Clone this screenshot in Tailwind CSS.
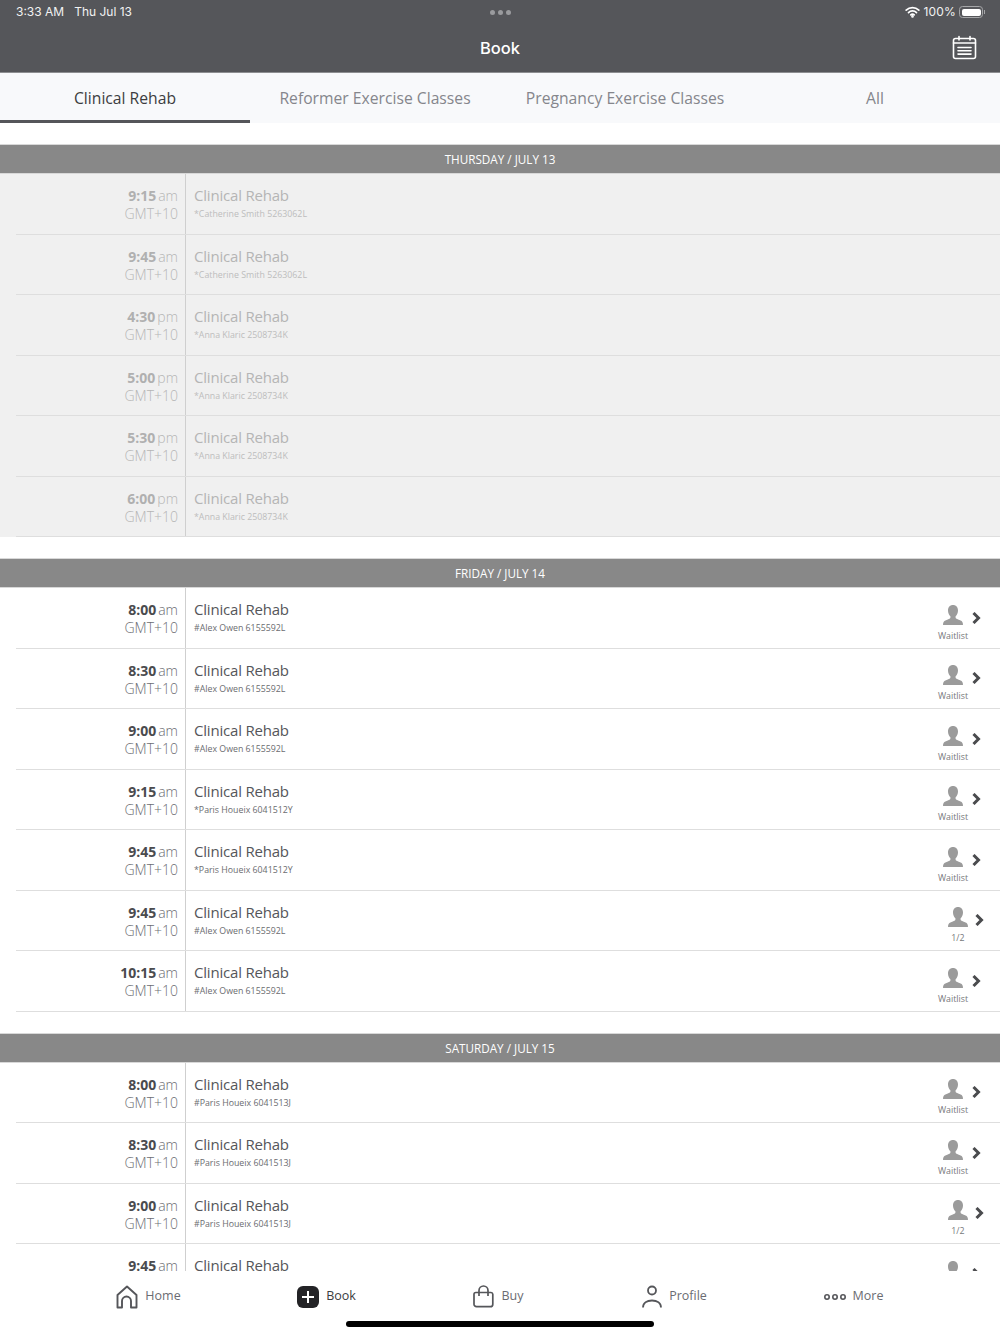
<!DOCTYPE html>
<html lang="en">
<head>
  <meta charset="UTF-8">
  <meta name="viewport" content="width=device-width, initial-scale=1.0">
  <title>Book</title>
  <script src="https://cdn.jsdelivr.net/npm/@tailwindcss/browser@4"></script>
</head>
<body class="bg-white font-['Open_Sans',sans-serif]">
  <div class="w-[1000px] h-[1334px] flex flex-col overflow-hidden relative">
    <!-- Header -->
    <header class="bg-[#55565a] h-[73px] shrink-0 border-b border-[#8d8e91] text-white relative">
      <div class="h-6 grid grid-cols-3 items-center pl-4 pr-[15px] font-['Inter',sans-serif] text-[12px] text-[#f2f2f2]">
        <div class="flex gap-[10px]"><span>3:33 AM</span><span>Thu Jul 13</span></div>
        <div class="flex items-center justify-center gap-[3px]">
          <span class="w-[5px] h-[5px] rounded-full bg-[#9a9b9e]"></span>
          <span class="w-[5px] h-[5px] rounded-full bg-[#9a9b9e]"></span>
          <span class="w-[5px] h-[5px] rounded-full bg-[#9a9b9e]"></span>
        </div>
        <div class="flex items-center justify-end">
          <svg width="15" height="12" viewBox="0 0 15 12" fill="none" stroke="white" stroke-width="1.7" stroke-linecap="round"><path d="M1.2 4.2a9 9 0 0 1 12.6 0"/><path d="M3.5 6.6a5.6 5.6 0 0 1 8 0"/><path d="M5.8 8.8a2.4 2.4 0 0 1 3.4 0"/><circle cx="7.5" cy="10.4" r=".5" fill="white"/></svg>
          <span class="ml-[3px] mr-[3px] tracking-[0.2px]">100%</span>
          <div class="flex items-center">
            <div class="w-6 h-[12px] rounded-[3.5px] border border-[#a5a6a8] p-[1.5px]"><div class="w-full h-full bg-white rounded-[2px]"></div></div>
            <div class="w-[1px] h-1 bg-[#a5a6a8] ml-[1px]"></div>
          </div>
        </div>
      </div>
      <div class="h-12 flex items-center justify-center font-['Inter',sans-serif] font-medium text-[16.5px]">Book</div>
      <svg class="absolute right-[23px] top-[35px]" width="25" height="25" viewBox="0 0 25 25" fill="none" stroke="white" stroke-width="1.6" stroke-linecap="round"><rect x="1.5" y="3.5" width="22" height="20" rx="2"/><path d="M1.5 8h22M7 1.5v3.5M18 1.5v3.5M6 12.5h13M6 15.8h13M6 19.1h13"/></svg>
    </header>

    <!-- Tabs -->
    <nav class="h-[50px] shrink-0 grid grid-cols-4 bg-[#f8f9fb] text-[15.7px] text-[#85868c]">
      <a class="flex items-center justify-center pt-[4px] border-b-[3px] border-[#55565a] text-[#3c3d40]">Clinical Rehab</a>
      <a class="flex items-center justify-center pt-[1px]">Reformer Exercise Classes</a>
      <a class="flex items-center justify-center pt-[1px]">Pregnancy Exercise Classes</a>
      <a class="flex items-center justify-center pt-[1px]">All</a>
    </nav>

    <!-- Schedule -->
    <main id="schedule" class="flex-1 min-h-0 overflow-hidden pt-[21px]"></main>

    <!-- Bottom tab bar -->
    <footer class="h-[63px] shrink-0 bg-white relative text-[12.5px] text-[#6b6c72]">
      <div class="h-[50px] grid grid-cols-5 px-[60px] pt-[1px]">
        <a class="flex items-center justify-center gap-[7px] pl-[1px]">
          <svg width="22" height="24" viewBox="0 0 22 24" fill="none" stroke="#55565a" stroke-width="1.9" stroke-linejoin="round"><path d="M1.5 22.5V10L11 1.5 20.5 10v12.5h-5.5v-6.5a4.500 4.500 0 0 0-9 0v6.500z"/></svg>
          <span>Home</span>
        </a>
        <a class="flex items-center justify-center gap-[7px] pl-[5px] text-[#3c3d40]">
          <span class="w-[22px] h-[22px] rounded-[6px] bg-[#232326] flex items-center justify-center">
            <svg width="12" height="12" viewBox="0 0 12 12" stroke="white" stroke-width="2"><path d="M6 0v12M0 6h12"/></svg>
          </span>
          <span>Book</span>
        </a>
        <a class="flex items-center justify-center gap-[7px] pr-[3px]">
          <svg width="21" height="23" viewBox="0 0 21 23" fill="none" stroke="#55565a" stroke-width="1.7" stroke-linejoin="round"><path d="M3 7.5h15a1.8 1.8 0 0 1 1.8 1.7v10a2.5 2.5 0 0 1-2.5 2.5H3.5A2.5 2.5 0 0 1 1 19.2v-10a1.8 1.8 0 0 1 2-1.7z"/><path d="M6 11V5.5a4.5 4.5 0 0 1 9 0V11"/></svg>
          <span>Buy</span>
        </a>
        <a class="flex items-center justify-center gap-[7px] pr-[3px]">
          <svg width="20" height="23" viewBox="0 0 20 23" fill="none" stroke="#55565a" stroke-width="1.8"><circle cx="10" cy="5.5" r="4"/><path d="M1 22.5c0-4.5 4-7 9-7s9 2.5 9 7"/></svg>
          <span>Profile</span>
        </a>
        <a class="flex items-center justify-center gap-[7px] pl-[3px]">
          <svg width="22" height="6" viewBox="0 0 22 6" fill="none" stroke="#55565a" stroke-width="1.6"><circle cx="3" cy="3" r="2.2"/><circle cx="11" cy="3" r="2.2"/><circle cx="19" cy="3" r="2.2"/></svg>
          <span>More</span>
        </a>
      </div>
      <div class="absolute left-[346px] top-[50px] w-[308px] h-[6px] rounded-full bg-black"></div>
    </footer>
  </div>

  <script>
    const days = [
      { title: 'THURSDAY / JULY 13', past: true, rows: [
        ['9:15', 'am', '*Catherine Smith 5263062L'],
        ['9:45', 'am', '*Catherine Smith 5263062L'],
        ['4:30', 'pm', '*Anna Klaric 2508734K'],
        ['5:00', 'pm', '*Anna Klaric 2508734K'],
        ['5:30', 'pm', '*Anna Klaric 2508734K'],
        ['6:00', 'pm', '*Anna Klaric 2508734K'],
      ]},
      { title: 'FRIDAY / JULY 14', rows: [
        ['8:00', 'am', '#Alex Owen 6155592L', 'Waitlist'],
        ['8:30', 'am', '#Alex Owen 6155592L', 'Waitlist'],
        ['9:00', 'am', '#Alex Owen 6155592L', 'Waitlist'],
        ['9:15', 'am', '*Paris Houeix 6041512Y', 'Waitlist'],
        ['9:45', 'am', '*Paris Houeix 6041512Y', 'Waitlist'],
        ['9:45', 'am', '#Alex Owen 6155592L', '1/2'],
        ['10:15', 'am', '#Alex Owen 6155592L', 'Waitlist'],
      ]},
      { title: 'SATURDAY / JULY 15', rows: [
        ['8:00', 'am', '#Paris Houeix 6041513J', 'Waitlist'],
        ['8:30', 'am', '#Paris Houeix 6041513J', 'Waitlist'],
        ['9:00', 'am', '#Paris Houeix 6041513J', '1/2'],
        ['9:45', 'am', '#Paris Houeix 6041513J', 'Waitlist'],
      ]},
    ];

    const person = `<svg width="22" height="20" viewBox="0 0 22 20" fill="#9b9b9b"><path d="M11 0c3 0 5 2.2 5 5.4 0 2.4-1 4.6-2.4 5.9v1.4c0 1 2.5 1.7 5 2.9 1.5.7 2.4 1.8 2.4 4.4H1c0-2.6.9-3.7 2.4-4.4 2.5-1.2 5-1.900 5-2.900v-1.400C7 10 6 7.800 6 5.400 6 2.200 8 0 11 0z"/></svg>`;
    const chevron = `<svg width="9" height="12" viewBox="0 0 9 12" fill="none" stroke="#4a4b4e" stroke-width="3"><path d="M1.5 1l5 5-5 5"/></svg>`;

    function slot(label) {
      const waitlist = label === 'Waitlist';
      return `<div class="flex items-start pt-[16.5px] ${waitlist ? 'pr-[19px]' : 'pr-[16px]'}">
        <div class="w-[30px] flex flex-col items-center"><div class="h-[20px]">${person}</div><div class="text-[8.8px] leading-[12px] mt-[5px] text-[#77787c]">${label}</div></div>
        <div class="mt-[7px] ${waitlist ? 'ml-[4px]' : 'ml-[2px]'}">${chevron}</div>
      </div>`;
    }

    document.getElementById('schedule').innerHTML = days.map(day => `
      <section class="mb-[21px]">
        <h2 class="h-[30px] pt-[2px] bg-[#888888] border-t border-[#d8d8d8] border-b text-white text-[11.7px] font-normal flex items-center justify-center">${day.title}</h2>
        <div class="${day.past ? 'bg-[#f0f0f0]' : 'bg-white'}">
          ${day.rows.map(r => `
            <div class="pl-4">
              <div class="h-[60.5px] border-b border-[#dedede] flex">
                <div class="w-[170px] border-r border-[#cfcfcf] pr-[7px] pt-[13px] text-right text-[14px] font-light leading-[18px] ${day.past ? 'text-[#b5b5b5]' : 'text-[#6c6d72]'}">
                  <div><b class="font-bold mr-[2px] ${day.past ? 'text-[#b0b0b0]' : 'text-[#4a4b4e]'}">${r[0]}</b>${r[1]}</div>
                  <div>GMT+10</div>
                </div>
                <div class="flex-1 pl-2 pt-[10px]">
                  <div class="text-[15px] tracking-[-0.2px] leading-[22px] ${day.past ? 'text-[#b5b5b5]' : 'text-[#55565a]'}">Clinical Rehab</div>
                  <div class="text-[8.8px] leading-[12px] mt-[2px] ${day.past ? 'text-[#bdbdbd]' : 'text-[#6b6c70]'}">${r[2]}</div>
                </div>
                ${r[3] ? slot(r[3]) : ''}
              </div>
            </div>`).join('')}
        </div>
      </section>`).join('');
  </script>
</body>
</html>
